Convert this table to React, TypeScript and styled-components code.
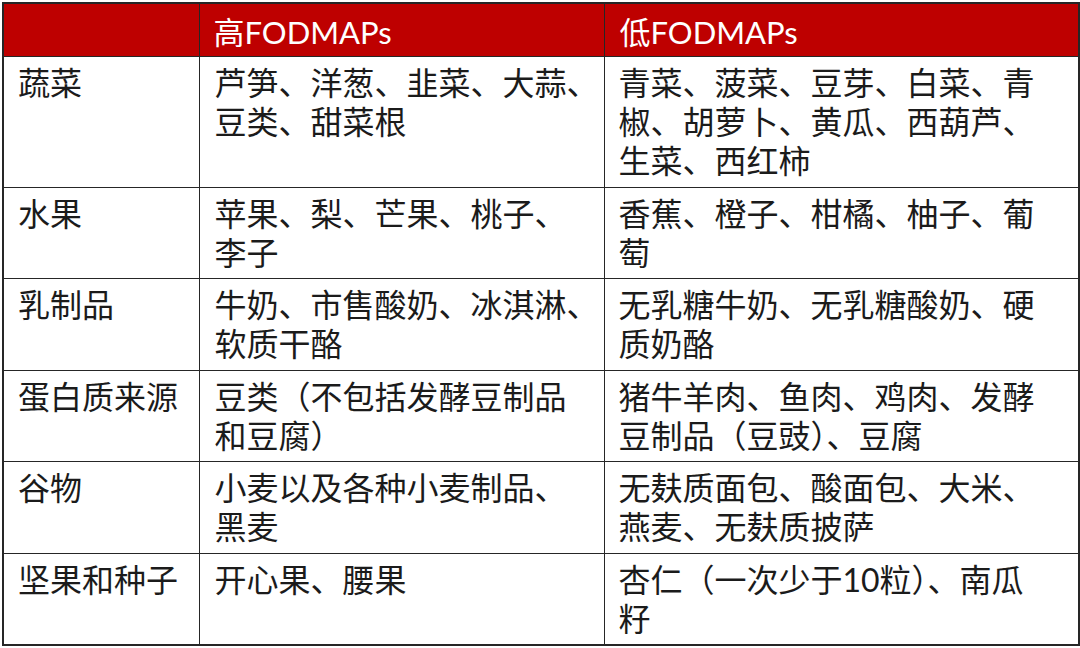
import styled, { createGlobalStyle } from 'styled-components'

type Row = {
  group: string
  high: string[]
  low: string[]
}

const rows: Row[] = [
  {
    group: '蔬菜',
    high: ['芦笋、洋葱、韭菜、大蒜、', '豆类、甜菜根'],
    low: ['青菜、菠菜、豆芽、白菜、青', '椒、胡萝卜、黄瓜、西葫芦、', '生菜、西红柿'],
  },
  {
    group: '水果',
    high: ['苹果、梨、芒果、桃子、', '李子'],
    low: ['香蕉、橙子、柑橘、柚子、葡', '萄'],
  },
  {
    group: '乳制品',
    high: ['牛奶、市售酸奶、冰淇淋、', '软质干酪'],
    low: ['无乳糖牛奶、无乳糖酸奶、硬', '质奶酪'],
  },
  {
    group: '蛋白质来源',
    high: ['豆类（不包括发酵豆制品', '和豆腐）'],
    low: ['猪牛羊肉、鱼肉、鸡肉、发酵', '豆制品（豆豉）、豆腐'],
  },
  {
    group: '谷物',
    high: ['小麦以及各种小麦制品、', '黑麦'],
    low: ['无麸质面包、酸面包、大米、', '燕麦、无麸质披萨'],
  },
  {
    group: '坚果和种子',
    high: ['开心果、腰果'],
    low: ['杏仁（一次少于10粒）、南瓜', '籽'],
  },
]

function App() {
  return (
    <>
      <GlobalStyle />
      <StyledTable>
        <colgroup>
          <col style={{ width: 196 }} />
          <col style={{ width: 405 }} />
          <col style={{ width: 475 }} />
        </colgroup>
        <thead>
          <tr>
            <StyledHead></StyledHead>
            <StyledHead $pad={14}>高FODMAPs</StyledHead>
            <StyledHead $pad={15}>低FODMAPs</StyledHead>
          </tr>
        </thead>
        <tbody>
          {rows.map(row => (
            <tr key={row.group}>
              <StyledCell $pad={14}>
                <StyledLine>{row.group}</StyledLine>
              </StyledCell>
              <StyledCell $pad={15}>
                {row.high.map(line => (
                  <StyledLine key={line}>{line}</StyledLine>
                ))}
              </StyledCell>
              <StyledCell $pad={14}>
                {row.low.map(line => (
                  <StyledLine key={line}>{line}</StyledLine>
                ))}
              </StyledCell>
            </tr>
          ))}
        </tbody>
      </StyledTable>
    </>
  )
}

export default App

const GlobalStyle = createGlobalStyle`
  html, body {
    margin: 0;
    padding: 0;
    background: #ffffff;
  }
  body {
    font-family: Lato, "Noto Sans CJK SC", sans-serif;
    color: #1b1b1b;
  }
`

const StyledTable = styled.table`
  margin: 2px 0 0 2px;
  width: 1076px;
  table-layout: fixed;
  border-collapse: collapse;
  border: 2px solid #262626;
`

const StyledHead = styled.th<{ $pad?: number }>`
  height: 52px;
  padding: 0 0 0 ${p => p.$pad ?? 14}px;
  background: #be0000;
  color: #ffffff;
  font-size: 31px;
  font-weight: 400;
  text-align: left;
  vertical-align: middle;
  border: 1px solid #262626;
  border-top: 2px solid #262626;
`

const StyledCell = styled.td<{ $pad?: number }>`
  padding: 6px 0 6.5px ${p => p.$pad ?? 14}px;
  font-size: 32px;
  line-height: 39px;
  vertical-align: top;
  text-align: left;
  border: 1px solid #262626;
`

const StyledLine = styled.span`
  display: block;
  white-space: nowrap;
`
